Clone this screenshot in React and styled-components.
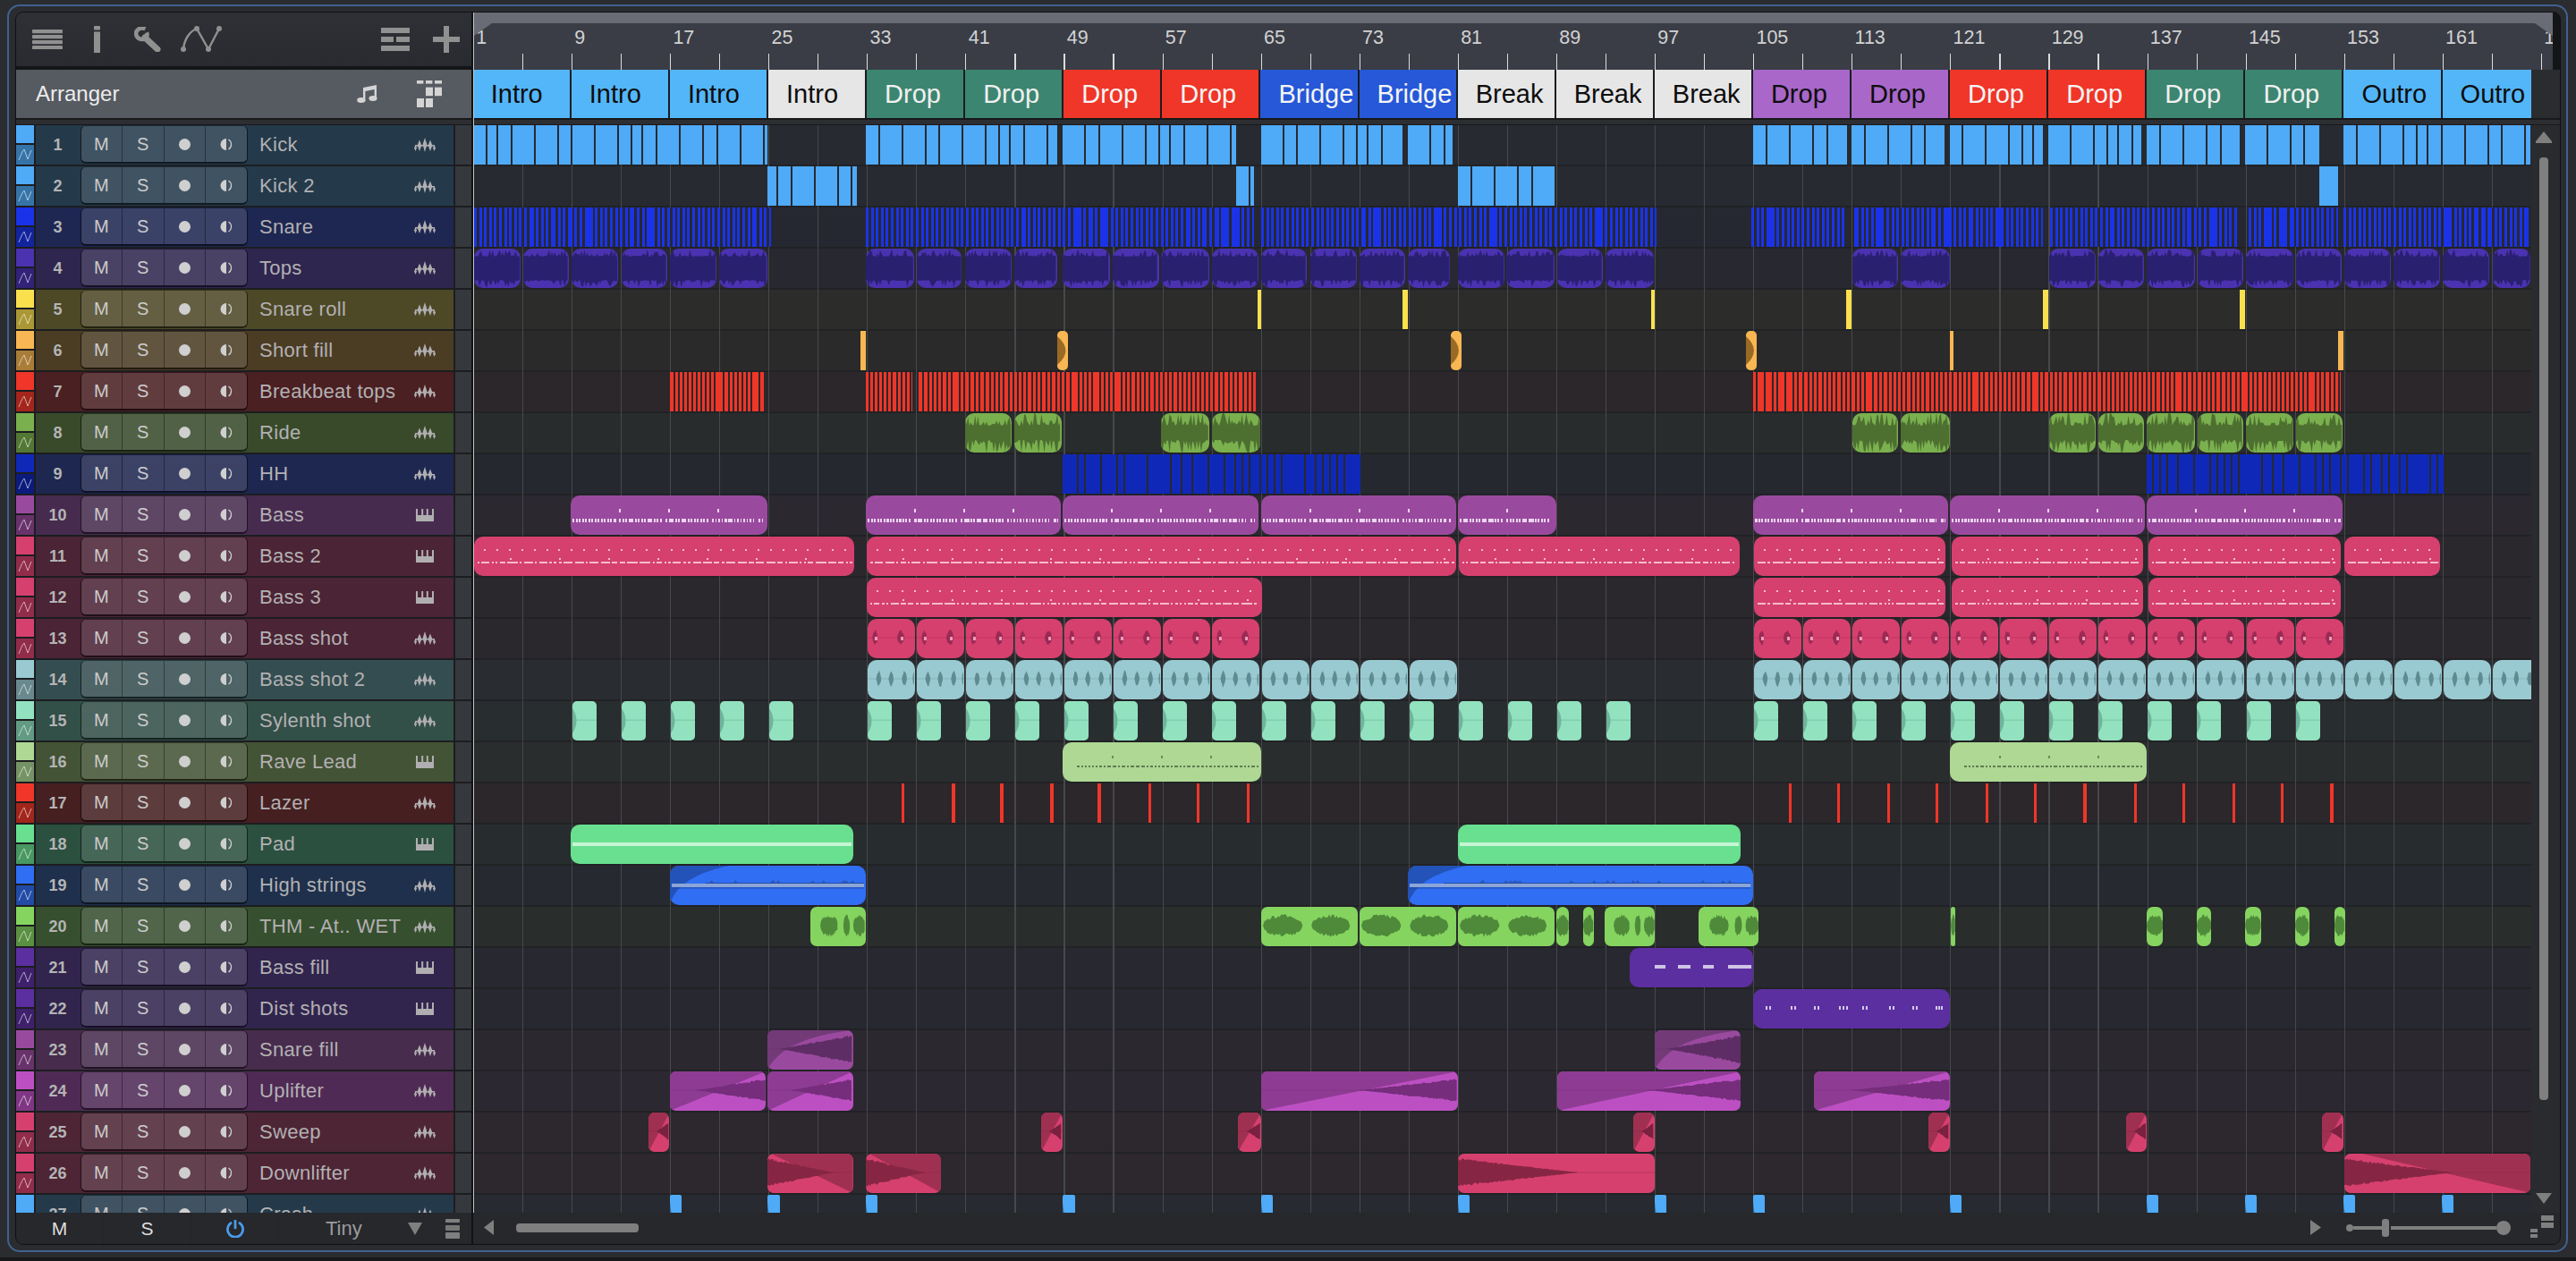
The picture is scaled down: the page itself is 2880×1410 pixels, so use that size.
import React from 'react';
import styled, { createGlobalStyle } from 'styled-components';

const GlobalStyle = createGlobalStyle`
  html, body { margin: 0; padding: 0; background: #2a2c30; }
  body { width: 2880px; height: 1410px; overflow: hidden; font-family: "Liberation Sans", Arial, sans-serif; }
`;

/* ---------- colour + wave helpers ---------- */
const toRgb = (h) => [1, 3, 5].map((i) => parseInt(h.slice(i, i + 2), 16));
const toHex = (r) => '#' + r.map((v) => Math.round(Math.max(0, Math.min(255, v))).toString(16).padStart(2, '0')).join('');
const mix = (h1, h2, t) => { const A = toRgb(h1), B = toRgb(h2); return toHex(A.map((v, i) => v + (B[i] - v) * t)); };
const dark = (h, t) => mix(h, '#000000', t);

const rng = (seed) => () => {
  seed = (seed + 0x6d2b79f5) | 0;
  let t = Math.imul(seed ^ (seed >>> 15), 1 | seed);
  t = (t + Math.imul(t ^ (t >>> 7), 61 | t)) ^ t;
  return ((t ^ (t >>> 14)) >>> 0) / 4294967296;
};

const envelopePath = (x0, x1, step, cy, topAmp, botAmp) => {
  const up = [], down = [];
  for (let x = x0; x <= x1 + 0.001; x += step) {
    up.push(`${x.toFixed(1)} ${(cy - topAmp(x)).toFixed(1)}`);
    down.unshift(`${x.toFixed(1)} ${(cy + botAmp(x)).toFixed(1)}`);
  }
  return `M${up.join('L')}L${down.join('L')}Z`;
};

/* ---------- timeline geometry ---------- */
const BAR = 13.7625;
const ORIGIN = -1.3;
const a = (z) => z / 1.352;
const b = (z) => 1150 + z / 1.352;
const zz = (left, right = []) => [
  ...left.map(([l, r]) => [a(l), a(r)]),
  ...right.map(([l, r]) => [b(l), b(r)]),
];
const make = (kind, pairs, opts = {}) => pairs.map(([l, r]) => ({ l, w: r - l, kind, ...opts }));
const steps = (from, to, width, every = 4) => {
  const out = [];
  for (let bar = from; bar < to; bar += every) {
    const l = ORIGIN + (bar - 1) * BAR + 1;
    out.push([l, l + width]);
  }
  return out;
};

const bass2Pairs = [[0, 425], [439, 1098], [1101, 1415], [1431, 1645], [1652, 1866], [1872, 2087], [2091, 2198]];
const topsPairs = zz(
  [[0, 70], [74, 143], [147, 218], [223, 292], [296, 367], [371, 443], [592, 665], [669, 737], [742, 812], [817, 881], [890, 961], [966, 1035], [1039, 1111], [1115, 1186], [1190, 1259], [1264, 1335], [1339, 1408], [1412, 1475], [1487, 1557], [1561, 1630]],
  [[6, 78], [82, 151], [155, 229], [528, 597], [601, 676], [826, 897], [901, 970], [974, 1046], [1050, 1119], [1123, 1195], [1199, 1268], [1272, 1343], [1347, 1417], [1421, 1491], [1497, 1554]]
);
const ridePairs = zz(
  [[742, 813], [817, 888], [1039, 1111], [1115, 1189]],
  [[528, 597], [601, 676], [826, 897], [901, 970], [974, 1046], [1050, 1119], [1123, 1195], [1199, 1270]]
);
const lazerPairs = zz(
  [646, 722, 795, 871, 943, 1019, 1092, 1168].map((z) => [z, z + 4.8]),
  [432, 505, 581, 654, 730, 803, 878, 954, 1027, 1103, 1176, 1251].map((z) => [z, z + 4.8])
);
const crashPairs = zz(
  [296, 444, 592, 890, 1190, 1487].map((z) => [z, z + 18]),
  [230, 378, 676, 973, 1122, 1271, 1419].map((z) => [z, z + 18])
);

const C = {
  kick: '#4faaf7', snare: '#1a33e8', tops: '#4a32b0', yellow: '#fbe04e', orange: '#f8b752', red: '#ef3628',
  ride: '#7ab04e', hh: '#1028b8', bass: '#9a4a9e', pink: '#d6406f', ice: '#9acad1', mint: '#92e2c0',
  rave: '#aed894', pad: '#68e08f', strings: '#306ef4', thm: '#85d460', violet: '#5c2fa0', upl: '#bc50c2',
};

const TRACKS = [
  { name: 'Kick', type: 'a', c: C.kick, bg: '#243a4b', clips: make('kick', zz([[0, 443], [592, 881], [889, 1152], [1190, 1403], [1411, 1479]], [[378, 520], [527, 668], [676, 816], [825, 966], [973, 1114], [1122, 1235], [1271, 1554]])) },
  { name: 'Kick 2', type: 'a', c: C.kick, bg: '#243a4b', clips: make('kick', [...zz([[443, 579], [1152, 1179]], [[1235, 1263]]), [a(1487), b(81)]]) },
  { name: 'Snare', type: 'a', c: C.snare, bg: '#1e2752', clips: make('snare', [...zz([[0, 449], [592, 1179]], [[376, 520], [532, 816], [828, 1114], [1127, 1263], [1271, 1554]]), [a(1190), b(232)]]) },
  { name: 'Tops', type: 'a', c: C.tops, bg: '#2e264f', clips: make('loop', topsPairs, { wave: '#2a2070', spike: 4 }) },
  { name: 'Snare roll', type: 'a', c: C.yellow, bg: '#4d4826', clips: make('plain', zz([[1184, 1190], [1403, 1411]], [[224, 230], [519, 527], [816, 825], [1114, 1122]])) },
  { name: 'Short fill', type: 'a', c: C.orange, bg: '#4b3c24', clips: [...make('plain', zz([[584, 592]], [[676, 681], [1263, 1271]])), ...make('edge', zz([[881, 898], [1476, 1492]], [[368, 384]]), { wave: '#9a6a24', deep: true })] },
  { name: 'Breakbeat tops', type: 'a', c: C.red, bg: '#4a2022', clips: make('break', zz([[296, 370], [371, 438], [592, 662], [672, 1181]], [[378, 1267]])) },
  { name: 'Ride', type: 'a', c: C.ride, bg: '#384a2a', clips: make('loop', ridePairs, { wave: '#4d6f30', spike: 12 }) },
  { name: 'HH', type: 'a', c: C.hh, bg: '#1e2750', clips: make('hats', zz([[890, 1340]], [[974, 1422]])) },
  { name: 'Bass', type: 'm', c: C.bass, bg: '#472b4f', clips: make('bass', [...zz([[146, 443], [592, 887], [890, 1186], [1190, 1484]], [[378, 673], [676, 971], [973, 1270]]), [a(1487), b(81)]]) },
  { name: 'Bass 2', type: 'm', c: C.pink, bg: '#4b2435', clips: make('bass2', bass2Pairs) },
  { name: 'Bass 3', type: 'm', c: C.pink, bg: '#4b2435', clips: make('bass2', [[439, 881], [1431, 1645], [1652, 1866], [1872, 2087]]) },
  { name: 'Bass shot', type: 'a', c: C.pink, bg: '#4b2435', clips: make('shot', [...steps(33, 65, 53), ...steps(105, 153, 53)], { wave: '#9b2a55' }) },
  { name: 'Bass shot 2', type: 'a', c: C.ice, bg: '#344d50', clips: make('shot2', [...steps(33, 81, 53), ...steps(105, 167, 53)], { wave: '#5f8b93' }) },
  { name: 'Sylenth shot', type: 'a', c: C.mint, bg: '#324f48', clips: make('edge', [...steps(9, 29, 27), ...steps(33, 97, 27), ...steps(105, 153, 27)], { wave: '#6fb49b', line: '#82ccaf' }) },
  { name: 'Rave Lead', type: 'm', c: C.rave, bg: '#435335', clips: make('rave', [[658, 880], [1650, 1870]]) },
  { name: 'Lazer', type: 'a', c: C.red, bg: '#461f21', clips: make('plain', lazerPairs) },
  { name: 'Pad', type: 'm', c: C.pad, bg: '#2b5040', clips: make('pad', [[a(146), a(573)], [a(1487), b(360)]]) },
  { name: 'High strings', type: 'a', c: C.strings, bg: '#1e304c', clips: make('strings', [[a(296), a(592)], [a(1412), b(378)]]) },
  { name: 'THM - At.. WET', type: 'a', c: C.thm, bg: '#364f2e', clips: make('thm', [...zz([[509, 592], [1190, 1336], [1338, 1484]], [[81, 100], [122, 138], [154, 230], [296, 387], [677, 684], [973, 998], [1049, 1071], [1122, 1146], [1198, 1219], [1257, 1273]]), [a(1487), b(78)]], { wave: '#4f8a3a' }) },
  { name: 'Bass fill', type: 'm', c: C.violet, bg: '#31254e', clips: make('fill', zz([], [[192, 378]])) },
  { name: 'Dist shots', type: 'm', c: C.violet, bg: '#31254e', clips: make('dist', zz([], [[378, 676]])) },
  { name: 'Snare fill', type: 'a', c: C.bass, bg: '#472c4d', clips: make('rise', zz([[444, 573]], [[230, 360]]), { shade: '#733a78', wave: '#5e2d65', curve: true, from: 0.15, amp: 15 }) },
  { name: 'Uplifter', type: 'a', c: C.upl, bg: '#4f2a55', clips: [
    ...make('rise', zz([[296, 441], [444, 573]], [[470, 676]]), { shade: '#8e3b93', wave: '#752d7c', from: 0.28, amp: 12 }),
    ...make('rise', zz([[1190, 1487]], [[82, 360]]), { shade: '#8e3b93', wave: '#752d7c', from: 0.5, amp: 12 }),
  ] },
  { name: 'Sweep', type: 'a', c: C.pink, bg: '#4d2535', clips: make('rise', zz([[263, 295], [857, 889], [1155, 1190]], [[198, 230], [644, 676], [942, 973], [1239, 1271]]), { shade: '#a03052', wave: '#7a2040', from: 0.4, amp: 10 }) },
  { name: 'Downlifter', type: 'a', c: C.pink, bg: '#4d2535', clips: [
    ...make('fall', zz([[444, 573], [592, 706]]), { shade: '#a03052', wave: '#862644', until: 0.78 }),
    ...make('fall', [[a(1487), b(230)]], { shade: null, wave: '#862644', until: 0.61 }),
    ...make('fall', zz([], [[1272, 1554]]), { shade: '#a03052', wave: '#862644', until: 0.58, longRamp: true }),
  ] },
  { name: 'Crash', type: 'a', c: C.kick, bg: '#243a4b', clips: make('crash', crashPairs, { wave: '#2f6fa8' }) },
];

const SECTIONS = [
  ['Intro', 'sky'], ['Intro', 'sky'], ['Intro', 'sky'], ['Intro', 'white'],
  ['Drop', 'green'], ['Drop', 'green'], ['Drop', 'red'], ['Drop', 'red'],
  ['Bridge', 'blue'], ['Bridge', 'blue'],
  ['Break', 'white'], ['Break', 'white'], ['Break', 'white'],
  ['Drop', 'purple'], ['Drop', 'purple'], ['Drop', 'red'], ['Drop', 'red'],
  ['Drop', 'green'], ['Drop', 'green'], ['Outro', 'sky'], ['Outro', 'sky'],
];
const SECTION_THEME = {
  sky: ['#53b6f8', '#0d0d0d'], white: ['#e6e6e6', '#0d0d0d'], green: ['#3c8570', '#f0f0f0'], red: ['#ef3628', '#f5f5f5'],
  blue: ['#2658d8', '#f5f5f5'], purple: ['#a867c9', '#0d0d0d'],
};

/* ---------- layout ---------- */
const Outer = styled.div`
  box-sizing: border-box; width: 2863px; height: 1395px; margin: 5px 0 0 8px; padding: 6px 6px 6px 7px;
  border: 2px solid #41618f; border-radius: 14px; background: #2a2c30;
`;
const BottomStrip = styled.div`height: 4px; margin-top: 6px; background: #17181a;`;
const Inner = styled.div`
  box-sizing: border-box; height: 100%; display: flex; border: 1px solid #0f1012; border-radius: 9px;
  background: #141517; overflow: hidden;
`;
const LeftCol = styled.div`width: 509px; flex: none; display: flex; flex-direction: column;`;
const Divider = styled.div`width: 2px; flex: none; background: #111214;`;
const RightCol = styled.div`flex: 1; min-width: 0; display: flex; flex-direction: column;`;
const TimelinePane = styled.div`height: 1342px; display: flex; flex-direction: column; border-left: 1px solid #c4c4c4; background: #141517;`;

const Toolbar = styled.div`height: 60px; display: flex; align-items: center; padding-left: 18px; background: linear-gradient(#2e3035, #292b30);`;
const ToolIcon = styled.svg`display: block; flex: none; margin-left: ${(p) => p.$ml || 0}px; color: #909090;`;

const ArrangerHead = styled.div`
  height: 54px; margin-top: 4px; display: flex; align-items: center; padding-left: 22px; background: #565a61;
  color: #ececec; font-size: 24px;
`;
const ArrangerLabel = styled.span`width: 359px;`;
const HeadIcon = styled.svg`display: block; flex: none; color: #d4d4d4; margin-left: ${(p) => p.$ml || 0}px;`;

const Band = styled.div`height: 8px; flex: none; box-sizing: border-box; border-top: 2px solid #17181a; border-bottom: 1px solid #17181a; background: #2d2e32;`;

const TrackList = styled.div`height: 1216px; overflow: hidden; background: #1c1d20;`;
const TrackRow = styled.div`height: 44px; margin-bottom: 2px; display: flex;`;
const Strip = styled.div`width: 20px; flex: none; display: flex; flex-direction: column; gap: 1.5px;`;
const StripTop = styled.div`height: 20px; flex: none; background: ${(p) => p.$c};`;
const StripBottom = styled.div`flex: 1; display: flex; align-items: center; justify-content: center; background: ${(p) => p.$c};`;
const TrackBody = styled.div`
  width: 467px; margin-left: 1.5px; flex: none; display: flex; align-items: center; background: ${(p) => p.$bg};
`;
const TrackNum = styled.div`width: 50px; flex: none; text-align: center; font-size: 18px; font-weight: 700; color: #b4b4b4;`;
const BtnGroup = styled.div`
  width: 187px; height: 43px; align-self: flex-start; flex: none; display: flex; box-sizing: border-box; overflow: hidden;
  border: 1px solid rgba(0, 0, 0, .55); border-top-color: rgba(0, 0, 0, .25); border-bottom-width: 2px; border-radius: 6px;
`;
const Btn = styled.div`
  flex: 1; display: flex; align-items: center; justify-content: center; background: rgba(255, 255, 255, .13);
  font-size: 20px; color: #cbcbcb; & + & { border-left: 1px solid rgba(0, 0, 0, .38); }
`;
const Dot = styled.span`width: 13px; height: 13px; border-radius: 50%; background: #cfcfcf;`;
const TrackName = styled.div`
  flex: 1; min-width: 0; padding-left: 13.5px; font-size: 22px; letter-spacing: .3px; color: #b2b0b2; white-space: nowrap; overflow: hidden;
`;
const TypeSlot = styled.div`width: 44px; flex: none; display: flex; justify-content: flex-start; color: #b0aeb0;`;
const Rail = styled.div`flex: 1; margin-left: 2px; background: #35383c;`;

const Footer = styled.div`height: 35px; flex: 1; display: flex; align-items: center; background: #26282c; color: #dedede; font-size: 21px;`;
const FootCell = styled.div`
  width: 98px; height: 100%; flex: none; display: flex; align-items: center; justify-content: center; box-sizing: border-box;
  border-right: 1px solid #222428;
`;
const TinyLabel = styled.div`margin-left: 52px; width: 92px; color: #9c9c9c; font-size: 22px;`;
const FootGlyph = styled.svg`display: block; flex: none; margin-left: ${(p) => p.$ml || 0}px; color: #7f7f7f;`;

const Ruler = styled.div`
  position: relative; width: 2324px; height: 64px; flex: none; box-sizing: border-box; border-top: 12px solid #696c74;
  background-color: #3a3d46; overflow: hidden; display: flex; font-size: 21.5px; line-height: 22px; color: #d2d2d2;
  background-image: repeating-linear-gradient(to right, transparent 0, transparent 53.9px, #dcdcdc 53.9px, #dcdcdc 55.05px);
  background-size: 100% 18px; background-position: 0 bottom; background-repeat: no-repeat;
  &::before, &::after { content: ''; position: absolute; top: 0; width: 20px; height: 14px; background: #696c74; }
  &::before { left: 0; clip-path: polygon(0 0, 100% 0, 0 100%); }
  &::after { right: 0; clip-path: polygon(0 0, 100% 0, 100% 100%); }
`;
const RulerCell = styled.div`flex: 0 0 110.1px; padding: 5px 0 0 3.5px; box-sizing: border-box; &:first-child { margin-left: -1.3px; }`;

const SectionBar = styled.div`width: 2300px; height: 54px; flex: none; display: flex; overflow: hidden;`;
const Section = styled.div`
  flex: 0 0 110.1px; box-sizing: border-box; height: 54px; display: flex; align-items: center; padding-left: 20px; overflow: hidden; white-space: nowrap;
  border-right: 2px solid #1b1c1f; font-size: 29px; background: ${(p) => SECTION_THEME[p.$k][0]}; color: ${(p) => SECTION_THEME[p.$k][1]};
  &:first-child { margin-left: -1.3px; }
`;
const SectionRow = styled.div`display: flex; height: 54px; flex: none; background: #2a2c30;`;

const Middle = styled.div`display: flex; height: 1216px; flex: none;`;
const gridLines = 'repeating-linear-gradient(to right, transparent 0, transparent 53.9px, #46484b 53.9px, #46484b 55.05px)';
const LaneList = styled.div`width: 2300px; flex: none; overflow: hidden; background-color: #212225; background-image: ${gridLines};`;
const Lane = styled.div`
  position: relative; height: 44px; margin-bottom: 2px; overflow: hidden;
  background-color: ${(p) => p.$bg}; background-image: ${gridLines};
`;
const Clip = styled.div`
  position: absolute; top: 0; height: 44px; overflow: hidden; background: ${(p) => p.$c}; border-radius: ${(p) => p.$r || 0}px;
`;
const ClipArt = styled.svg`display: block; shape-rendering: ${(p) => (p.$crisp ? 'crispEdges' : 'auto')};`;

const VScroll = styled.div`flex: 1; display: flex; flex-direction: column; align-items: center; padding-top: 7px; background: #292b2f; padding-right: 4px;`;
const VThumb = styled.div`width: 10px; height: 1054px; margin-top: 16px; border-radius: 4px; background: #7f7f7f;`;
const VDown = styled.svg`display: block; margin-top: 104px;`;

const BottomBar = styled.div`flex: 1; display: flex; align-items: center; background: #26282c; padding: 0 0 2px 12px; color: #7f7f7f;`;
const HThumb = styled.div`width: 137px; height: 10px; margin-left: 25px; border-radius: 4px; background: #7f7f7f;`;
const Slider = styled.div`width: 184px; margin-left: 28px; display: flex; align-items: center; flex: none;`;
const SliderKnob = styled.div`width: ${(p) => p.$s}px; height: ${(p) => p.$s}px; flex: none; border-radius: 50%; background: #7f7f7f;`;
const SliderLine = styled.div`height: 4px; flex: ${(p) => (p.$w ? `0 0 ${p.$w}px` : 1)}; background: #7f7f7f;`;
const SliderHandle = styled.div`width: 8px; height: 20px; flex: none; margin-right: 2px; border-radius: 3px; background: #7f7f7f;`;

/* ---------- icons ---------- */
const WaveType = () => (
  <svg width="24" height="16" viewBox="0 0 24 16" fill="currentColor">
    <path d="M12 0l2.4 7.5L12 16 9.6 7.5zM6 2.5l2.4 6L6 15 3.6 8.5zM18 2.5l2.4 6L18 15l-2.4-6.5zM1.5 8L3 11.5 1.5 15 0 11.5zM22.5 8l1.5 3.5-1.5 3.5-1.5-3.5z" />
    <rect x="1" y="8" width="22" height="1.6" />
  </svg>
);
const KeysType = () => (
  <svg width="20" height="14" viewBox="0 0 20 14" fill="currentColor" style={{ marginLeft: 2 }}>
    <path d="M0 0h2v7h4.2V0h2v7h3.6V0h2v7h4.2V0h2v14H0z" />
  </svg>
);
const MonitorIcon = () => (
  <svg width="14" height="13" viewBox="0 0 14 13">
    <path d="M7 0a6.5 6.5 0 0 0 0 13z" fill="#cfcfcf" />
    <path d="M9.5 1a6.5 6.5 0 0 1 0 11" stroke="#cfcfcf" strokeWidth="1.3" fill="none" />
  </svg>
);
const AutoIcon = () => (
  <svg width="18" height="15" viewBox="0 0 18 15" fill="none" stroke="rgba(255,255,255,.6)" strokeWidth="1">
    <path d="M2 14C4 9 6 4 8 2l4 11 4-10" />
  </svg>
);

/* ---------- clip drawings ---------- */
const KICK_CYCLE = [13, 10, 14, 24, 24, 14, 24, 24, 13, 10, 14, 24, 24, 13, 24, 24];
const hashSeed = (clip) => Math.round(clip.l * 7 + clip.w * 3) + 11;

function separators(clip, lane) {
  const r = rng(hashSeed(clip));
  const out = [];
  let x = 0;
  let i = Math.floor(r() * 16);
  const gap = clip.kind === 'hats' || clip.kind === 'kick' || clip.kind === 'break' ? 2 : 2.6;
  while (x < clip.w) {
    let w;
    if (clip.kind === 'kick') { w = KICK_CYCLE[i % 16]; i += 1; }
    else if (clip.kind === 'snare') { const v = r(); w = v < 0.88 ? 3 : v < 0.95 ? 5 : 9; }
    else if (clip.kind === 'break') { const v = r(); w = v < 0.65 ? 3 : v < 0.92 ? 4 : 7; }
    else { const v = r(); w = v < 0.45 ? 6 : v < 0.75 ? 10 : v < 0.9 ? 16 : 24; }
    x += w;
    if (x + 1 < clip.w) out.push(<rect key={x} x={x.toFixed(1)} y="0" width={gap} height="44" fill={lane} />);
    x += gap;
  }
  return out;
}

function loopWave(clip) {
  const r1 = rng(hashSeed(clip));
  const r2 = rng(hashSeed(clip) + 5);
  const amp = (r) => () => {
    const v = r();
    return clip.spike > 8 ? 8 + v * v * clip.spike + (v > .75 ? 3 : 0) : 13 + v * 2 + (v > .65 ? (v - .6) * 16 : 0);
  };
  return <path d={envelopePath(0, clip.w, 1.6, 22, amp(r1), amp(r2))} fill={clip.wave} />;
}

function spindle(x0, x1, amp, seed, color, power = 0.4) {
  const r = rng(seed);
  const width = Math.max(1, x1 - x0);
  const f = (x) => amp * Math.pow(Math.max(0, Math.sin(Math.PI * Math.min(1, (x - x0) / width))), power) * (0.72 + r() * 0.36);
  return <path key={seed} d={envelopePath(x0, x1, Math.max(.8, width / 26), 21, f, f)} fill={color} />;
}

function ramp(clip) {
  const r1 = rng(hashSeed(clip)), r2 = rng(hashSeed(clip) + 9);
  const x0 = clip.w * clip.from;
  const f = (r) => (x) => Math.max(0.6, ((x - x0) / (clip.w - x0)) * clip.amp * (0.9 + r() * 0.2));
  return <path d={envelopePath(x0, clip.w, 1.6, 21, f(r1), f(r2))} fill={clip.wave} />;
}

function drops(clip) {
  const r1 = rng(hashSeed(clip)), r2 = rng(hashSeed(clip) + 9);
  const end = clip.w * clip.until;
  const f = (r) => (x) => Math.max(0.5, (1 - x / end) * 15 * (0.9 + r() * 0.2));
  return <path d={envelopePath(0, end, 1.6, 21, f(r1), f(r2))} fill={clip.wave} />;
}

function notesBass(clip, color) {
  const r = rng(hashSeed(clip));
  const out = [];
  for (let x = 55; x < clip.w - 8; x += 55) out.push(<rect key={`t${x}`} x={x - 1} y="15" width="2" height="4" fill={color} />);
  let k = 0;
  for (let x = 2.5; x < clip.w - 4; k += 1) {
    out.push(<rect key={`n${k}`} x={x.toFixed(1)} y="26.5" width={r() > 0.75 ? 3 : 1.8} height="3.6" fill={color} />);
    x += k % 14 === 13 ? 6.4 : 3.5;
  }
  return out;
}
function notesBass2(clip, color) {
  const r = rng(hashSeed(clip));
  const out = [];
  for (let x = 11; x < clip.w - 8; x += 13.9) out.push(<rect key={`t${x}`} x={x.toFixed(1)} y="14" width="2" height="2" fill={color} />);
  for (let x = 40; x < clip.w - 8; x += 55) out.push(<rect key={`m${x}`} x={x.toFixed(1)} y="24" width="2" height="2" fill={color} />);
  let x = 4;
  while (x < clip.w - 4) {
    const w = [9, 12, 6, 3, 2, 2, 10][Math.floor(r() * 7)];
    out.push(<rect key={`d${x}`} x={x.toFixed(1)} y="28" width={Math.min(w, clip.w - 2 - x)} height="2" fill={color} />);
    x += w + 2.4;
  }
  return out;
}
function notesRave(clip) {
  const r = rng(hashSeed(clip));
  const out = [];
  for (let x = 55; x < clip.w - 8; x += 55) out.push(<rect key={`t${x}`} x={x} y="15" width="2" height="3" fill="#6b8d5a" />);
  let x = 16;
  while (x < clip.w - 3) {
    const w = 2 + Math.floor(r() * 3);
    out.push(<rect key={`d${x}`} x={x} y="26" width={w} height="2" fill="#5f7d50" />);
    x += w + 2;
  }
  return out;
}

function ClipDrawing({ clip, lane }) {
  const { w, kind } = clip;
  const view = { width: w, height: 44, viewBox: `0 0 ${w} 44` };
  switch (kind) {
    case 'kick': case 'snare': case 'break': case 'hats':
      return <ClipArt {...view} $crisp>{separators(clip, lane)}</ClipArt>;
    case 'loop':
      return <ClipArt {...view}>{loopWave(clip)}</ClipArt>;
    case 'edge':
      return (
        <ClipArt {...view}>
          {clip.line && <rect x="0" y="20.5" width={w} height="1.4" fill={clip.line} />}
          <path d={clip.deep ? `M0 6Q${w * 1.5} 22 0 38Z` : `M0 8Q${Math.min(9, w * .55)} 22 0 36Z`} fill={clip.wave} />
        </ClipArt>
      );
    case 'shot':
      return (
        <ClipArt {...view}>
          <rect x="0" y="20.5" width={w} height="1" fill="#bf3762" />
          {spindle(w * .1, w * .22, 8.5, hashSeed(clip), clip.wave, .7)}
          {spindle(w * .62, w * .78, 8.5, hashSeed(clip) + 2, clip.wave, .7)}
          <rect x={w * .15} y="20" width="3" height="4" fill="#e9a0b8" />
          <rect x={w * .7} y="20" width="3" height="4" fill="#e9a0b8" />
        </ClipArt>
      );
    case 'shot2':
      return (
        <ClipArt {...view}>
          <rect x="0" y="20.5" width={w} height="1" fill="#86b5bd" />
          {[.18, .44, .72, .95].map((p, i) => spindle(w * p, w * p + (i === 3 ? 2 : 6), 9, hashSeed(clip) + i, clip.wave, 1))}
        </ClipArt>
      );
    case 'thm': {
      const parts = w > 90 ? [[2, w * .43], [w * .52, w * .92]] : w > 40 ? [[w * .18, w * .5], [w * .6, w * .72], [w * .78, w]] : [[0, w]];
      return (
        <ClipArt {...view}>
          {parts.map(([p, q], i) => spindle(p, q, 12, hashSeed(clip) + i, clip.wave))}
        </ClipArt>
      );
    }
    case 'bass':
      return <ClipArt {...view} $crisp>{notesBass(clip, '#ecd5f0')}</ClipArt>;
    case 'bass2':
      return <ClipArt {...view} $crisp>{notesBass2(clip, '#f4bccd')}</ClipArt>;
    case 'rave':
      return <ClipArt {...view} $crisp>{notesRave(clip)}</ClipArt>;
    case 'fill':
      return (
        <ClipArt {...view} $crisp>
          {[[28, 12], [54, 14], [82, 12], [110, 26]].map(([x, d]) => <rect key={x} x={x} y="19" width={d} height="4" fill="#cfc4e6" />)}
        </ClipArt>
      );
    case 'dist':
      return (
        <ClipArt {...view} $crisp>
          {[14, 18, 42, 46, 68, 72, 96, 100, 104, 122, 126, 152, 156, 178, 182, 204, 207, 210].map((x) => <rect key={x} x={x} y="19" width="2.2" height="4" fill="#d5cbe9" />)}
        </ClipArt>
      );
    case 'pad':
      return <ClipArt {...view} $crisp><rect x="2" y="20" width={w - 4} height="4" fill="#c6f5d6" /></ClipArt>;
    case 'strings': {
      const r = rng(hashSeed(clip));
      const marks = [];
      for (let i = 0; i < w / 24; i += 1) { const x = 40 + r() * (w - 50); marks.push(<path key={i} d={`M${x} 19l2-3 2 3z`} fill="#2b57b8" />); }
      return (
        <ClipArt {...view}>
          <path d="M0 44Q8 12 66 0H0Z" fill="#2352b8" />
          {marks}
          <rect x="2" y="20" width={w - 4} height="4" fill="#8ca5d8" />
          <rect x="40" y="19" width={w - 42} height="1" fill="#1f4aa5" />
          <rect x="2" y="24.4" width={w - 4} height="1" fill="#1f4aa5" />
        </ClipArt>
      );
    }
    case 'rise':
      return (
        <ClipArt {...view}>
          <path d={clip.curve ? `M0 44Q${w * .2} 8 ${w} 0H0Z` : `M0 44L${w} 0H0Z`} fill={clip.shade} />
          <rect x="0" y="20.5" width={w} height="1" fill={clip.wave} opacity=".35" />
          {ramp(clip)}
        </ClipArt>
      );
    case 'fall':
      return (
        <ClipArt {...view}>
          {clip.shade && <path d={`M${clip.longRamp ? 20 : 4} 0L${w} 44V0Z`} fill={clip.shade} />}
          <rect x="0" y="20.5" width={w} height="1" fill={clip.wave} opacity=".35" />
          {drops(clip)}
        </ClipArt>
      );
    case 'crash':
      return <ClipArt {...view}><path d="M0 8Q2 32 12 44H0Z" fill={clip.wave} /></ClipArt>;
    default:
      return null;
  }
}

const RADIUS = { loop: 10, shot: 10, shot2: 10, edge: 5, bass: 10, bass2: 10, rave: 10, pad: 10, strings: 10, thm: 7, fill: 10, dist: 10, rise: 7, fall: 7, crash: 2 };

const TrackHeader = ({ track, index }) => (
  <TrackRow>
    <Strip>
      <StripTop $c={track.c} />
      <StripBottom $c={dark(track.c, 0.32)}><AutoIcon /></StripBottom>
    </Strip>
    <TrackBody $bg={track.bg}>
      <TrackNum>{index + 1}</TrackNum>
      <BtnGroup>
        <Btn>M</Btn>
        <Btn>S</Btn>
        <Btn><Dot /></Btn>
        <Btn><MonitorIcon /></Btn>
      </BtnGroup>
      <TrackName>{track.name}</TrackName>
      <TypeSlot>{track.type === 'a' ? <WaveType /> : <KeysType />}</TypeSlot>
    </TrackBody>
    <Rail />
  </TrackRow>
);

const TrackLane = ({ track }) => {
  const laneBg = mix('#27282c', track.bg, 0.12);
  return (
    <Lane $bg={laneBg}>
      {track.clips.map((clip, i) => (
        <Clip key={i} $c={track.c} $r={RADIUS[clip.kind]} style={{ left: clip.l, width: clip.w }}>
          <ClipDrawing clip={clip} lane={laneBg} />
        </Clip>
      ))}
    </Lane>
  );
};

const RULER = Array.from({ length: 22 }, (_, i) => 1 + i * 8);

export default function App() {
  return (
    <>
      <GlobalStyle />
      <Outer>
        <Inner>
          <LeftCol>
            <Toolbar>
              <ToolIcon width="34" height="22" viewBox="0 0 34 22" fill="currentColor">
                <rect y="0" width="34" height="4.2" rx="1" /><rect y="6" width="34" height="4.2" rx="1" /><rect y="12" width="34" height="4.2" rx="1" /><rect y="18" width="34" height="4.2" rx="1" />
              </ToolIcon>
              <ToolIcon $ml={35} width="7" height="30" viewBox="0 0 7 30" fill="currentColor">
                <rect width="7" height="4.5" rx="1" /><rect y="6.5" width="7" height="23.5" />
              </ToolIcon>
              <ToolIcon $ml={38} width="30" height="28" viewBox="0 0 30 28" fill="none" stroke="currentColor">
                <path d="M12 12L26 25" strokeWidth="7" strokeLinecap="round" />
                <path d="M12.5 2.2C6.5 -.4 .8 4 2.4 9.4c1.4 4.8 8 6.2 11 2.4 1.4-1.8 1.4-3.6.6-5.4" strokeWidth="4.6" />
              </ToolIcon>
              <ToolIcon $ml={22} width="46" height="30" viewBox="0 0 46 30" fill="none" stroke="currentColor" strokeWidth="2.4">
                <path d="M3 26C4 15 10 6 18 3L31 26 43 3" />
                <g fill="currentColor" stroke="none"><circle cx="3" cy="26" r="3" /><circle cx="18" cy="3" r="3" /><circle cx="31" cy="26" r="3" /><circle cx="43" cy="3" r="3" /></g>
              </ToolIcon>
              <ToolIcon $ml={178} width="32" height="26" viewBox="0 0 32 26" fill="currentColor">
                <rect width="32" height="6" /><rect y="10" width="14" height="6" /><rect x="17" y="10" width="15" height="6" /><rect y="20" width="32" height="6" />
              </ToolIcon>
              <ToolIcon $ml={26} width="30" height="30" viewBox="0 0 30 30" fill="currentColor">
                <rect x="12" width="6" height="30" /><rect y="12" width="30" height="6" />
              </ToolIcon>
            </Toolbar>
            <ArrangerHead>
              <ArrangerLabel>Arranger</ArrangerLabel>
              <HeadIcon width="23" height="20" viewBox="0 0 23 20" fill="currentColor">
                <path d="M7 3L22 0v15.5h-2.4V5L9.4 7v11.5H7z" />
                <ellipse cx="4.8" cy="17" rx="4.6" ry="3" /><ellipse cx="18" cy="15" rx="4.6" ry="3" />
              </HeadIcon>
              <HeadIcon $ml={44} width="28" height="30" viewBox="0 0 28 30" fill="currentColor">
                <rect width="7.4" height="3.6" /><rect x="10" width="7.4" height="3.6" /><rect x="20" width="8" height="3.6" />
                <rect x="10" y="7.6" width="8" height="9.6" /><rect x="20" y="7.6" width="8" height="9.6" />
                <rect y="20" width="8" height="10" /><rect x="10" y="20" width="8" height="10" />
              </HeadIcon>
            </ArrangerHead>
            <Band />
            <TrackList>
              {TRACKS.map((t, i) => <TrackHeader key={i} track={t} index={i} />)}
            </TrackList>
            <Footer>
              <FootCell>M</FootCell>
              <FootCell>S</FootCell>
              <FootCell>
                <svg width="22" height="20" viewBox="0 0 22 20" fill="none" stroke="#4a9bea" strokeWidth="2.8" strokeLinecap="round">
                  <path d="M6 3.6a8.6 8.6 0 1 0 10 0" /><path d="M11 1v8" />
                </svg>
              </FootCell>
              <TinyLabel>Tiny</TinyLabel>
              <FootGlyph width="16" height="14" viewBox="0 0 16 14" fill="currentColor"><path d="M0 0h16l-8 14z" /></FootGlyph>
              <FootGlyph $ml={26} width="16" height="22" viewBox="0 0 16 22" fill="currentColor">
                <rect width="16" height="4" rx="1" /><rect y="7" width="16" height="6" rx="1" opacity=".9" /><rect y="15" width="16" height="7" rx="1" />
              </FootGlyph>
            </Footer>
          </LeftCol>
          <Divider />
          <RightCol>
            <TimelinePane>
              <Ruler>
                {RULER.map((n) => <RulerCell key={n}>{n}</RulerCell>)}
              </Ruler>
              <SectionRow>
                <SectionBar>
                  {SECTIONS.map(([label, k], i) => <Section key={i} $k={k}>{label}</Section>)}
                </SectionBar>
              </SectionRow>
              <Band />
              <Middle>
                <LaneList>
                  {TRACKS.map((t, i) => <TrackLane key={i} track={t} />)}
                </LaneList>
                <VScroll>
                  <svg width="18" height="13" viewBox="0 0 18 13" fill="#7f7f7f"><path d="M9 0l9 11a1 1 0 0 1-1 2H1a1 1 0 0 1-1-2z" /></svg>
                  <VThumb />
                  <VDown width="18" height="12" viewBox="0 0 18 12" fill="#7f7f7f"><path d="M0 0h18L9 12z" /></VDown>
                </VScroll>
              </Middle>
            </TimelinePane>
            <BottomBar>
              <svg width="11" height="17" viewBox="0 0 11 17" fill="currentColor"><path d="M11 0v17L0 8.5z" /></svg>
              <HThumb />
              <FootGlyph $ml={1869} width="12" height="17" viewBox="0 0 12 17" fill="currentColor"><path d="M0 0v17l12-8.5z" /></FootGlyph>
              <Slider>
                <SliderKnob $s={8} />
                <SliderLine $w={32} />
                <SliderHandle />
                <SliderLine />
                <SliderKnob $s={16} />
              </Slider>
              <FootGlyph $ml={22} width="8" height="10" viewBox="0 0 8 10" fill="currentColor" style={{ marginTop: 12 }}>
                <rect width="8" height="4" /><rect y="6" width="8" height="4" />
              </FootGlyph>
              <FootGlyph $ml={4} width="14" height="14" viewBox="0 0 14 14" fill="currentColor" style={{ marginTop: -14 }}>
                <rect width="14" height="6" /><rect y="8" width="14" height="6" />
              </FootGlyph>
            </BottomBar>
          </RightCol>
        </Inner>
      </Outer>
      <BottomStrip />
    </>
  );
}
